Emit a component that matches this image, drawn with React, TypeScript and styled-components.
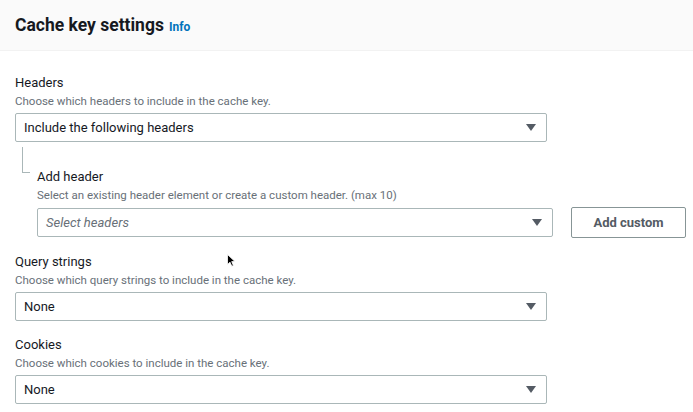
import styled, { createGlobalStyle } from "styled-components";

const Global = createGlobalStyle`
  html, body {
    margin: 0;
    padding: 0;
    background: #ffffff;
  }
  * {
    box-sizing: border-box;
  }
`;

const Page = styled.div`
  position: relative;
  width: 693px;
  height: 412px;
  overflow: hidden;
  font-family: Roboto, "Liberation Sans", Arial, sans-serif;
  color: #16191f;
  background: #ffffff;
`;

const Header = styled.div`
  height: 51px;
  background: #fafafa;
  border-bottom: 1px solid #f2f2f2;
  display: flex;
  align-items: center;
  padding: 0 15px;
  gap: 5px;
`;

const Title = styled.h2`
  margin: 0;
  font-size: 17.5px;
  font-weight: 700;
  color: #16191f;
`;

const Info = styled.span`
  font-size: 12px;
  font-weight: 700;
  color: #0073bb;
  margin-top: 3px;
`;

const Body = styled.div`
  display: flex;
  flex-direction: column;
  padding: 23px 0 0 15px;
  gap: 15px;
`;

const Field = styled.div<{ $nested?: boolean }>`
  position: relative;
  display: flex;
  flex-direction: column;
  padding-left: ${(p) => (p.$nested ? "22px" : "0")};
  margin-top: ${(p) => (p.$nested ? "11px" : "0")};

  ${(p) =>
    p.$nested &&
    `
    &::before {
      content: "";
      position: absolute;
      left: 7px;
      top: -21px;
      width: 7px;
      height: 25px;
      border-left: 1px solid #aab7b8;
      border-bottom: 1px solid #aab7b8;
    }
  `}
`;

const Label = styled.div`
  font-size: 13px;
  line-height: 18px;
  color: #16191f;
`;

const Desc = styled.div`
  font-size: 11.5px;
  line-height: 18px;
  color: #687078;
  margin-bottom: 3px;
`;

const Row = styled.div`
  display: flex;
  align-items: center;
  gap: 18px;
`;

const Select = styled.div<{ $width: number; $placeholder?: boolean }>`
  width: ${(p) => p.$width}px;
  flex: none;
  height: 29px;
  border: 1px solid #aab7b8;
  border-radius: 2px;
  display: flex;
  align-items: center;
  justify-content: space-between;
  padding: 0 10px 0 8px;
  font-size: 13px;
  color: ${(p) => (p.$placeholder ? "#687078" : "#16191f")};
  font-style: ${(p) => (p.$placeholder ? "italic" : "normal")};
  background: #ffffff;
`;

const Caret = styled.svg`
  width: 10px;
  height: 7px;
  flex: none;
`;

const Button = styled.button`
  width: 115px;
  height: 31px;
  flex: none;
  border: 1px solid #879596;
  border-radius: 2px;
  background: #ffffff;
  font-family: inherit;
  font-size: 13px;
  font-weight: 700;
  color: #545b64;
  padding: 0;
`;

const Cursor = styled.svg`
  position: absolute;
  left: 227px;
  top: 254px;
  width: 9px;
  height: 13px;
`;

function Arrow() {
  return (
    <Caret viewBox="0 0 10 7">
      <path d="M0 0 H10 L5 7 Z" fill="#545b64" />
    </Caret>
  );
}

type Dropdown = {
  label: string;
  desc: string;
  value: string;
};

const fields: Dropdown[] = [
  {
    label: "Query strings",
    desc: "Choose which query strings to include in the cache key.",
    value: "None",
  },
  {
    label: "Cookies",
    desc: "Choose which cookies to include in the cache key.",
    value: "None",
  },
];

export default function App() {
  return (
    <>
      <Global />
      <Page>
        <Header>
          <Title>Cache key settings</Title>
          <Info>Info</Info>
        </Header>
        <Body>
          <Field>
            <Label>Headers</Label>
            <Desc>Choose which headers to include in the cache key.</Desc>
            <Select $width={532}>
              <span>Include the following headers</span>
              <Arrow />
            </Select>
          </Field>
          <Field $nested>
            <Label>Add header</Label>
            <Desc>
              Select an existing header element or create a custom header. (max 10)
            </Desc>
            <Row>
              <Select $width={516} $placeholder>
                <span>Select headers</span>
                <Arrow />
              </Select>
              <Button>Add custom</Button>
            </Row>
          </Field>
          {fields.map((f) => (
            <Field key={f.label}>
              <Label>{f.label}</Label>
              <Desc>{f.desc}</Desc>
              <Select $width={532}>
                <span>{f.value}</span>
                <Arrow />
              </Select>
            </Field>
          ))}
        </Body>
        <Cursor viewBox="0 0 9 13">
          <path
            d="M0.5 0.5 L0.5 10.5 L3 8.2 L4.8 12.2 L6.4 11.5 L4.7 7.6 L8 7.6 Z"
            fill="#000000"
            stroke="#ffffff"
            strokeWidth="0.8"
          />
        </Cursor>
      </Page>
    </>
  );
}
